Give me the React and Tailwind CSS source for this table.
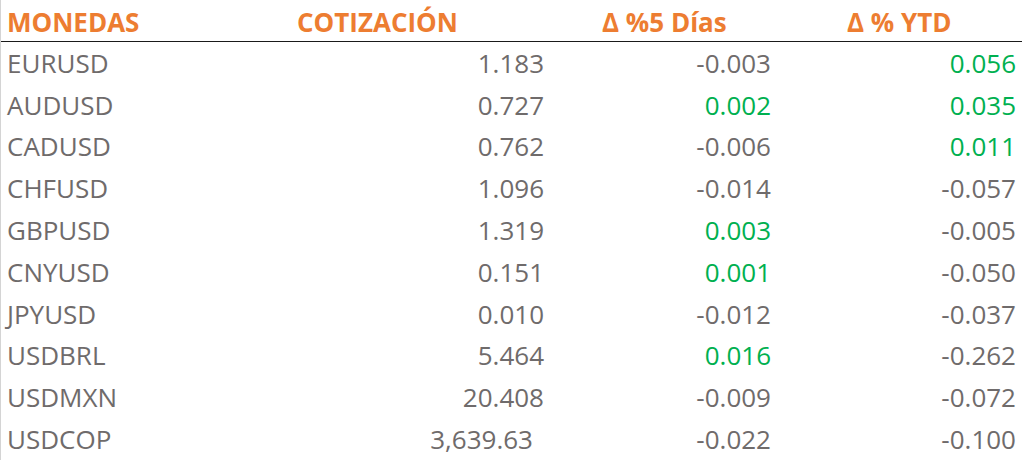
const rows = [
    ["EURUSD", "1.183", "-0.003", "0.056"],
    ["AUDUSD", "0.727", "0.002", "0.035"],
    ["CADUSD", "0.762", "-0.006", "0.011"],
    ["CHFUSD", "1.096", "-0.014", "-0.057"],
    ["GBPUSD", "1.319", "0.003", "-0.005"],
    ["CNYUSD", "0.151", "0.001", "-0.050"],
    ["JPYUSD", "0.010", "-0.012", "-0.037"],
    ["USDBRL", "5.464", "0.016", "-0.262"],
    ["USDMXN", "20.408", "-0.009", "-0.072"],
    ["USDCOP", "3,639.63", "-0.022", "-0.100"],
];

function Change({ value }) {
    const up = !value.startsWith("-");
    return (
        <div
            className={`pr-0 text-right ${up ? "text-[#00b050]" : "text-[#6f6b6b]"}`}
        >
            {value}
        </div>
    );
}

export default function App() {
    return (
        <div
            className="h-[461px] w-[1024px] overflow-hidden bg-white text-[26px] leading-none"
            style={{ fontFamily: '"Open Sans", "Noto Sans", sans-serif' }}
        >
            <div className="w-[1022px] border-l border-[#d4d4d4]">
                {/* header */}
                <div className="grid h-[42px] grid-cols-[199px_344px_227px_245px] items-center border-b border-[#1a1a1a] pt-[2px] font-bold text-[#ed7d31]">
                    <div className="pl-[6px]">MONEDAS</div>
                    <div className="pl-[97px]">COTIZACIÓN</div>
                    <div className="pl-[58px]">Δ %5 Días</div>
                    <div className="pl-[76px]">Δ % YTD</div>
                </div>

                {/* rows */}
                {rows.map(([name, price, d5, ytd]) => (
                    <div
                        key={name}
                        className="grid h-[41.8px] grid-cols-[199px_344px_227px_245px] items-center text-[#6f6b6b]"
                    >
                        <div className="pl-[6px]">{name}</div>
                        <div
                            className={`text-right ${name === "USDCOP" ? "pr-[11px]" : ""}`}
                        >
                            {price}
                        </div>
                        <Change value={d5} />
                        <Change value={ytd} />
                    </div>
                ))}
            </div>
        </div>
    );
}
